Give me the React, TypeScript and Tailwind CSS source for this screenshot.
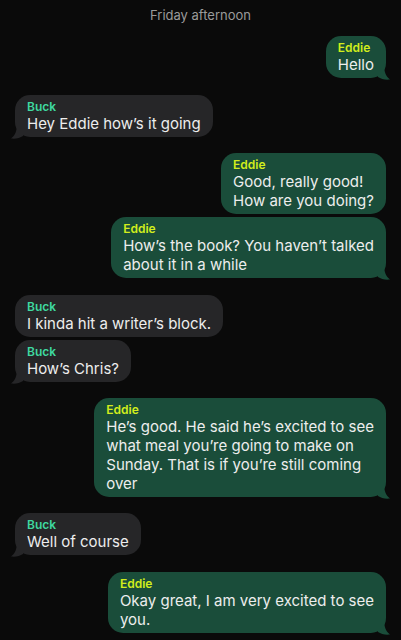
type Msg = { from: "Eddie" | "Buck"; lines: string[]; tail: boolean; gap: string };

const messages: Msg[] = [
  { from: "Eddie", lines: ["Hello"], tail: true, gap: "mt-[12px]" },
  { from: "Buck", lines: ["Hey Eddie how\u2019s it going"], tail: true, gap: "mt-[17px]" },
  { from: "Eddie", lines: ["Good, really good!", "How are you doing?"], tail: false, gap: "mt-[16px]" },
  { from: "Eddie", lines: ["How\u2019s the book? You haven\u2019t talked", "about it in a while"], tail: true, gap: "mt-[3px]" },
  { from: "Buck", lines: ["I kinda hit a writer\u2019s block."], tail: false, gap: "mt-[17px]" },
  { from: "Buck", lines: ["How\u2019s Chris?"], tail: true, gap: "mt-[3px]" },
  {
    from: "Eddie",
    lines: [
      "He\u2019s good. He said he\u2019s excited to see",
      "what meal you\u2019re going to make on",
      "Sunday. That is if you\u2019re still coming",
      "over",
    ],
    tail: true,
    gap: "mt-[16px]",
  },
  { from: "Buck", lines: ["Well of course"], tail: true, gap: "mt-[16px]" },
  { from: "Eddie", lines: ["Okay great, I am very excited to see", "you."], tail: true, gap: "mt-[17px]" },
];

function Tail({ side, color }: { side: "left" | "right"; color: string }) {
  if (side === "right") {
    return (
      <svg
        className="absolute bottom-[-2px] right-[-6px]"
        width="14"
        height="16"
        viewBox="0 0 14 16"
      >
        <path d="M0 0 H6 C6 8 8 12.5 12 15.5 C7 16 3 15 0 13 Z" fill={color} />
      </svg>
    );
  }
  return (
    <svg
      className="absolute bottom-[-2px] left-[-6px]"
      width="14"
      height="16"
      viewBox="0 0 14 16"
    >
      <path d="M14 0 H8 C8 8 6 12.5 2 15.5 C7 16 11 15 14 13 Z" fill={color} />
    </svg>
  );
}

function Bubble({ msg }: { msg: Msg }) {
  const mine = msg.from === "Eddie";
  return (
    <div className={`flex ${mine ? "justify-end" : "justify-start"} ${msg.gap}`}>
      <div
        className={`relative rounded-[15px] px-3 pt-[4px] pb-[4px] ${
          mine ? "bg-[#1a4d3a]" : "bg-[#262628]"
        }`}
      >
        <div
          className={`text-[12px] leading-[15px] font-semibold ${
            mine ? "text-[#d2ee1c]" : "text-[#3fd9a0]"
          }`}
        >
          {msg.from}
        </div>
        <div className="relative text-[15px] leading-[19px] text-[#ededed]">
          {msg.lines.map((l, i) => (
            <div key={i} className="whitespace-nowrap">
              {l}
            </div>
          ))}
        </div>
        {msg.tail && <Tail side={mine ? "right" : "left"} color={mine ? "#1a4d3a" : "#262628"} />}
      </div>
    </div>
  );
}

export default function App() {
  return (
    <div
      className="min-h-[640px] w-full bg-[#0a0a0a] px-[15px] pt-[6px]"
      style={{ fontFamily: "Inter, 'Liberation Sans', sans-serif" }}
    >
      <div className="text-center text-[13px] leading-[18px] text-[#9a9a9a]">Friday afternoon</div>
      <div className="flex flex-col">
        {messages.map((m, i) => (
          <Bubble key={i} msg={m} />
        ))}
      </div>
    </div>
  );
}
